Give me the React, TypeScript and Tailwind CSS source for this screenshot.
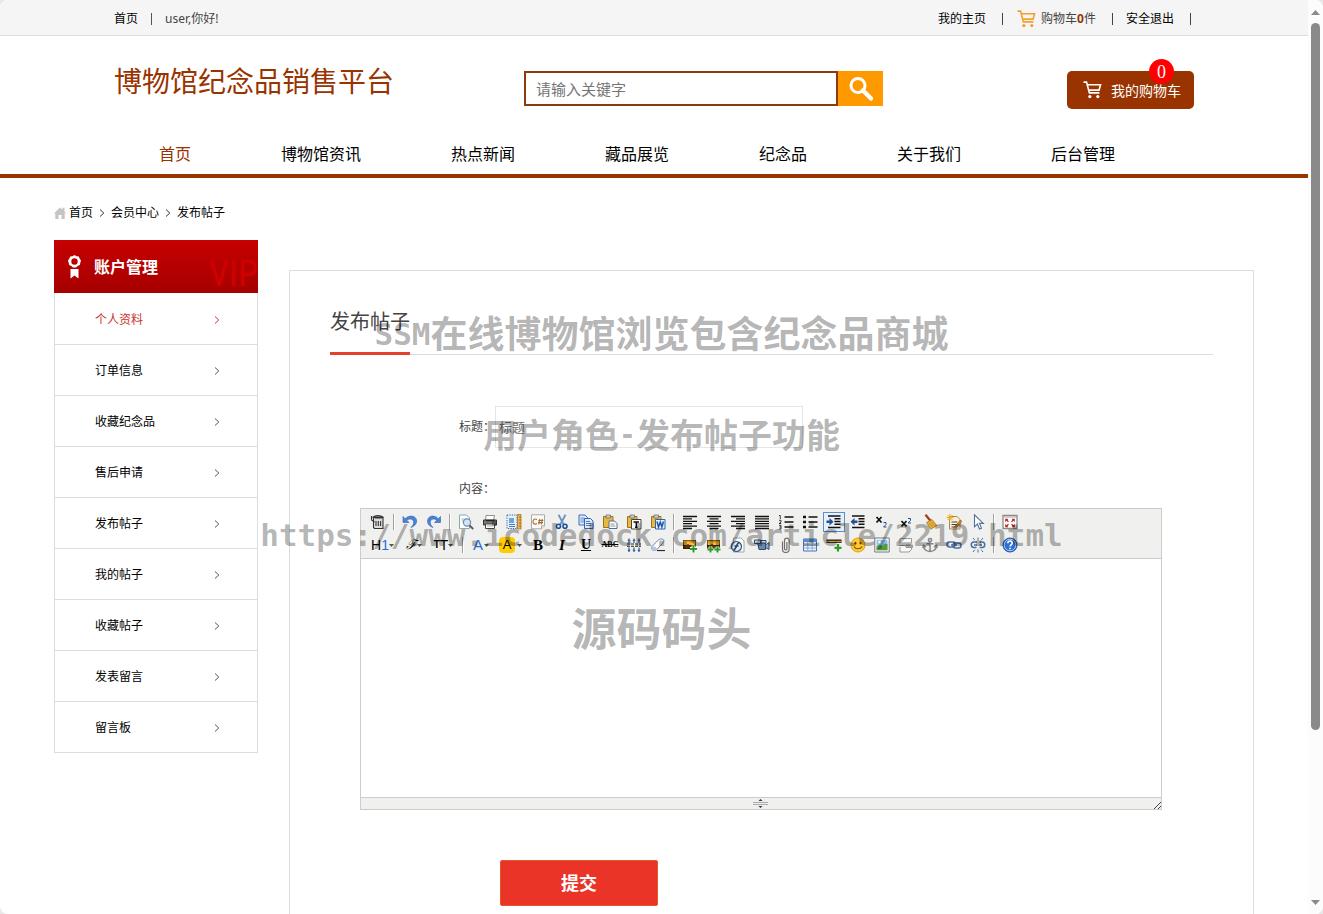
import React from 'react';

const navItems = ['首页', '博物馆资讯', '热点新闻', '藏品展览', '纪念品', '关于我们', '后台管理'];
const menuItems = ['个人资料', '订单信息', '收藏纪念品', '售后申请', '发布帖子', '我的帖子', '收藏帖子', '发表留言', '留言板'];

function CartIcon({ className }: { className: string }) {
  return (
    <svg className={className} viewBox="0 0 20 19" fill="none" stroke="currentColor" strokeWidth="1.7">
      <path d="M0.5 1.2h3.2l3 11.3h10.6M4.3 4h14.2l-1.6 5.6H6" />
      <circle cx="7.2" cy="16.4" r="1.7" fill="currentColor" stroke="none" />
      <circle cx="15.6" cy="16.4" r="1.7" fill="currentColor" stroke="none" />
    </svg>
  );
}

function Chevron({ className }: { className: string }) {
  return (
    <svg className={className} viewBox="0 0 6 8" fill="none" stroke="currentColor" strokeWidth="1">
      <path d="M1 0.5 4.8 4 1 7.5" />
    </svg>
  );
}

const lines = (rows: number[][]) => (
  <path
    d={rows.map(([x, w], i) => `M${x} ${2.5 + i * 2.4}h${w}`).join('')}
    stroke="#111"
    strokeWidth="1.3"
    fill="none"
  />
);

const clipboard = (
  <>
    <path d="M1.500 2.500h9.500v11h-9.500z" fill="#e9b93c" stroke="#9a7420" />
    <path d="M4 1h4.500v3H4z" fill="#c9c9c9" stroke="#666" strokeWidth=".7" />
  </>
);

const photo = (
  <>
    <path d="M1 3h13v9H1z" fill="#3a2106" />
    <path d="M1.500 3.500h12v4h-12z" fill="#e0941a" />
    <path d="M2 7c2-3 4-3 6-1l5-1v3H2z" fill="#f6c343" />
    <path d="M3 9l3-2 3 2 4-1v3H3z" fill="#5a3408" />
  </>
);

const icons: Record<string, React.ReactNode> = {
  source: (
    <g fill="none" stroke="#333" strokeWidth="1.100">
      <path d="M3.500 3.500h9.500v11H4.500l-1-1z" fill="#ddd" />
      <path d="M2.500 3.500c3-2.500 8-2.500 11 0M1.500 2v4l3 2M6 7v5M8.300 7v5M10.600 7v5M4.500 14.500h8" />
      <path d="M5 3.500h7" strokeWidth="2" />
    </g>
  ),
  undo: <path d="M1 2.500v6h6L4.800 6.300c2.700-2.300 6.200-1.400 6.800 1.200.4 1.900-.5 3.800-2.700 6 4.300-1.500 6.300-4.500 5.600-7.500C13.600 1.600 7.200.6 3.200 4.700z" fill="#4b83d6" stroke="#2c5fae" strokeWidth=".6" />,
  redo: <path d="M14.500 2.500v6h-6l2.200-2.200C8 4 5 5 4.300 7.500c-.4 1.900.5 3.800 2.700 6-4.300-1.500-6-4.500-5.300-7.500C2.500 1.600 8.300.6 12.300 4.700z" fill="#4b83d6" stroke="#2c5fae" strokeWidth=".6" />,
  preview: (
    <>
      <path d="M1.500 1h7l3 3v10.500h-10z" fill="#fff" stroke="#8aa" />
      <path d="M3.500 5h4M3.500 7h3" stroke="#9bb" />
      <circle cx="9" cy="8.500" r="3.600" fill="#cfe4f7" stroke="#6d8fb0" strokeWidth="1.200" />
      <path d="M11.500 11.300 15.200 15" stroke="#555" strokeWidth="1.800" />
    </>
  ),
  print: (
    <>
      <path d="M4 1.500h8.500l-1 5h-8z" fill="#fff" stroke="#777" strokeWidth=".8" />
      <path d="M1.500 6h13v5h-13z" fill="#777" stroke="#333" />
      <path d="M4 6.500h8.500" stroke="#222" strokeWidth="1.500" />
      <path d="M3.500 10h9v4.500h-9z" fill="#fff" stroke="#444" />
      <path d="M5 12h6" stroke="#aaa" />
    </>
  ),
  template: (
    <>
      <path d="M1 1h10v13.500H1z" fill="#e6f0fb" stroke="#2d5d9b" strokeDasharray="1.200 1.200" />
      <path d="M3 4h5v5H3z" fill="#6da6dd" />
      <path d="M3 10.500h6M3 12.500h6" stroke="#4a7db6" />
      <path d="M11.500.5h3.500v14.500h-3.500z" fill="#eeb54d" stroke="#a87217" strokeWidth=".8" />
      <path d="M13 3h2M13 6h2M13 9h2M13 12h2" stroke="#805510" strokeWidth=".7" />
    </>
  ),
  code: (
    <>
      <path d="M1.500.8h13v11l-3 3h-10z" fill="#fbfbf8" stroke="#aaa" />
      <path d="M14.500 11.800h-3v3" fill="#eee" stroke="#aaa" />
      <path d="M7 5.500c-3-1.500-4 .5-4 2.200S4.300 11 7 9.500M9.800 4.800l-1 5.500M12.300 4.800l-1 5.500M8.300 6.500h5M8 8.600h5" fill="none" stroke="#a66a2c" strokeWidth="1.100" />
    </>
  ),
  cut: (
    <>
      <path d="M4.500.8l5.200 9.700M11.500.8 6.300 10.500" stroke="#6d94bd" strokeWidth="1.800" />
      <circle cx="4.500" cy="12.300" r="2" fill="none" stroke="#1c4f9c" strokeWidth="1.600" />
      <circle cx="11" cy="12.300" r="2" fill="none" stroke="#1c4f9c" strokeWidth="1.600" />
    </>
  ),
  copy: (
    <>
      <path d="M1 1h6l2.500 2.500V11H1z" fill="#dceafb" stroke="#3d6fbb" />
      <path d="M2.500 4h4M2.500 6h5M2.500 8h4" stroke="#5f8fd2" />
      <path d="M6.500 4.500h6L15 7v7.500H6.500z" fill="#dceafb" stroke="#3463ad" />
      <path d="M8 7.500h4M8 9.500h5.500M8 11.500h5.500" stroke="#4a7fcc" />
    </>
  ),
  paste: (
    <>
      {clipboard}
      <path d="M7 7h5.500L15 9.500v5H7z" fill="#fff" stroke="#566d91" />
      <path d="M8.500 10h4M8.500 12h5" stroke="#89a" />
    </>
  ),
  plainpaste: (
    <>
      {clipboard}
      <path d="M5.500 5.500h9.500v9.500H5.500z" fill="#fff" stroke="#444" />
      <path d="M7.500 8h5.500M10.300 8v5.500M9 13.300h2.600" stroke="#111" strokeWidth="1.500" />
    </>
  ),
  wordpaste: (
    <>
      {clipboard}
      <path d="M5.500 5.500h9.500v9.500H5.500z" fill="#e8f1fd" stroke="#2c66b8" />
      <path d="M7 7.500l1.500 5.500L10.300 8l1.600 5 1.600-5.500" fill="none" stroke="#1d56ac" strokeWidth="1.500" />
    </>
  ),
  left: lines([[1, 14], [1, 9], [1, 14], [1, 9], [1, 14], [1, 9]]),
  center: lines([[1, 14], [3.5, 9], [1, 14], [3.5, 9], [1, 14], [3.5, 9]]),
  right: lines([[1, 14], [6, 9], [1, 14], [6, 9], [1, 14], [6, 9]]),
  justify: lines([[1, 14], [1, 14], [1, 14], [1, 14], [1, 14], [1, 14]]),
  ol: (
    <g stroke="#111" fill="none">
      <path d="M6.500 3h9M6.500 8h9M6.500 13h9" strokeWidth="1.300" />
      <path d="M1 1.500h1.300V5M1 6.300h2V8L1 9.500h2.300M1 11.300h2v3.700H1M1.500 13H3" strokeWidth=".8" />
    </g>
  ),
  ul: (
    <g stroke="#111">
      <path d="M6.500 3h9M6.500 8h9M6.500 13h9" strokeWidth="1.300" />
      <path d="M1 3h3M1 8h3M1 13h3" strokeWidth="2.600" />
    </g>
  ),
  indent: (
    <>
      <path d="M2 2h12.500M8.500 4.800h6M8.500 7.500h6M8.500 10.200h6M2 13.500h12.500" stroke="#111" strokeWidth="1.400" />
      <path d="M.5 6.500h3V4l4 3.800-4 3.700V9h-3z" fill="#234f95" />
    </>
  ),
  outdent: (
    <>
      <path d="M2 2h12.500M8.500 4.800h6M8.500 7.500h6M8.500 10.200h6M2 13.500h12.500" stroke="#111" strokeWidth="1.400" />
      <path d="M7.500 6.500h-3V4l-4 3.800 4 3.700V9h3z" fill="#234f95" />
    </>
  ),
  sub: (
    <>
      <path d="M2.500 3l5 5.500M7.500 3l-5 5.500" stroke="#111" strokeWidth="1.700" />
      <path d="M9.500 8.500h2.500v2l-2.500 2.500h3" fill="none" stroke="#234f95" />
    </>
  ),
  sup: (
    <>
      <path d="M3.500 7l5 5.500M8.500 7l-5 5.500" stroke="#111" strokeWidth="1.700" />
      <path d="M10 4.500h2.500v2L10 9h3" fill="none" stroke="#234f95" />
    </>
  ),
  clear: (
    <>
      <path d="M3.500.8 9 7.500" stroke="#a33b1c" strokeWidth="2.200" />
      <path d="M4.500 8.500 10 5.500l4.800 6-6 3.700z" fill="#e6b03a" stroke="#a8741a" strokeWidth=".8" />
      <path d="M7 9l4 4.500M9 8l4 4.500" stroke="#b67c1f" strokeWidth=".7" />
    </>
  ),
  quick: (
    <>
      <path d="M3.500 2.500H11l3 3V15H3.500z" fill="#fbf0d7" stroke="#a58a5a" />
      <path d="M5.500 8h6M5.500 10.500h6M5.500 13h4" stroke="#444" />
      <path d="M4 0v7M.5 3.500h7M1.500 1l5 5M6.500 1l-5 5" stroke="#edac1c" />
      <path d="M9 12.500 14.500 6l1.500 1.500-5.500 6z" fill="#d98c25" stroke="#704710" strokeWidth=".6" />
    </>
  ),
  select: <path d="M4.500.8v12l3-2.800 2 5 2-.9-2-4.700h3.800z" fill="#fff" stroke="#54719d" strokeWidth="1.100" />,
  full: (
    <>
      <path d="M1 1.500h14v13H1z" fill="#fff" stroke="#8b8b8b" strokeWidth="1.300" />
      <path d="M1.500 3h13" stroke="#aaa" />
      <path d="M3.500 5h2.500L3.500 7.500zM12.500 5v2.500L10 5zM3.500 13v-2.500L6 13zM12.500 13H10l2.500-2.500z" fill="#c3201f" stroke="#c3201f" strokeWidth=".5" />
      <path d="M4 5.500l2.500 2.300M12 5.500 9.500 7.800M4 12.500l2.500-2.300M12 12.500 9.500 10.200" stroke="#c3201f" strokeWidth="1.200" />
    </>
  ),
  lineheight: (
    <g stroke="#234f95" strokeWidth="1.100">
      <path d="M1 7h14M1 9.300h14" stroke="#222" strokeDasharray="3 1" />
      <path d="M3 6V1.500M8 6V1.500M13 6V1.500M3 10.500V15M8 10.500V15M13 10.500V15M1.800 3.200h2.400M6.800 3.200h2.400M11.800 3.200h2.400M1.800 13.200h2.400M6.800 13.200h2.400M11.800 13.200h2.400" />
    </g>
  ),
  eraser: (
    <>
      <path d="M2 9.500 8 3.200c1-1 2-1.200 3.200-1.200 2.500 0 3.500 1.500 2 3.500L7.500 12c-1 1-2 1.200-3.300 1.200C1.500 13.200.7 11.500 2 9.500z" fill="#fff" stroke="#7182a8" />
      <path d="M2 9.500c1.500-.8 4.500.5 5 2.700-1 1-2 1-3 1C1.500 13.200.7 11.500 2 9.500z" fill="#b9c5e4" />
      <path d="M7 13.600h8" stroke="#111" />
    </>
  ),
  image: (
    <>
      {photo}
      <path d="M11.500 8.500v7M8 12h7" stroke="#fff" strokeWidth="4" />
      <path d="M11.500 8.500v7M8 12h7" stroke="#2c9a27" strokeWidth="2" />
    </>
  ),
  multi: (
    <>
      {photo}
      <path d="M4.500 9.500v6M1.500 12.500h6M11.500 9.500v6M8.500 12.500h6" stroke="#fff" strokeWidth="3.500" />
      <path d="M4.500 9.500v6M1.500 12.500h6M11.500 9.500v6M8.500 12.500h6" stroke="#2c9a27" strokeWidth="2" />
    </>
  ),
  flash: (
    <>
      <path d="M3.500 1h7.500l3 3v11H3.500z" fill="#fff" stroke="#9aa" />
      <circle cx="6.500" cy="9.500" r="5" fill="#dfe9f2" stroke="#355878" strokeWidth="1.200" />
      <path d="M9.500 5.500c-3 0-3 7-6 7.500M4.500 9h4" fill="none" stroke="#28496b" strokeWidth="1.600" />
    </>
  ),
  media: (
    <>
      <path d="M3.500 6h8v6.500H5z" fill="#6c88aa" stroke="#314b6b" />
      <path d="M11.500 8l3.500-2.500v7l-3.500-2z" fill="#93abc6" stroke="#314b6b" />
      <path d="M.5 3h6v3.500h-6zM7 3.500h5V6H7z" fill="#c9d6e5" stroke="#314b6b" />
    </>
  ),
  file: <path d="M4.500 4.500v7.700a3.300 3.300 0 0 0 6.600 0V3.500a2.300 2.300 0 0 0-4.600 0v8.300a1.200 1.200 0 0 0 2.400 0V5" fill="none" stroke="#707070" strokeWidth="1.200" />,
  table: (
    <>
      <path d="M1.500 2h13v12h-13z" fill="#eef5fd" stroke="#4670b5" />
      <path d="M1.500 2h13v3h-13z" fill="#5d8bd0" />
      <path d="M1.500 8h13M1.500 11h13M5.800 5v9M10.200 5v9" stroke="#86a9db" />
    </>
  ),
  hr: (
    <>
      <path d="M.5 2.500h15V6H.5z" fill="#222" />
      <path d="M1 4.500h14" stroke="#d49b2a" strokeWidth="1.300" />
      <path d="M12 7v7.500M8.500 10.800h7" stroke="#2c9a27" strokeWidth="2.200" />
    </>
  ),
  emoji: (
    <>
      <circle cx="8" cy="8" r="7" fill="#fccb34" stroke="#e2a021" />
      <ellipse cx="5.500" cy="6.200" rx=".9" ry="1.400" fill="#6b3c06" />
      <ellipse cx="10.500" cy="6.200" rx=".9" ry="1.400" fill="#6b3c06" />
      <path d="M3.800 9.500c2 3 6.400 3 8.400 0" fill="none" stroke="#8b4b08" strokeWidth="1.200" />
    </>
  ),
  map: (
    <>
      <path d="M.8 1h14.400v14H.8z" fill="#fff" stroke="#777" />
      <path d="M2.500 2.800h11v10.500h-11z" fill="#8dc4ee" />
      <path d="M2.500 10c3-4 5-2 6-.5 2-4 4-3 5-2.500v6.300h-11z" fill="#569b3b" />
      <circle cx="5.500" cy="5" r="1.200" fill="#fff" />
    </>
  ),
  pagebreak: (
    <g stroke="#999" fill="#f8f8f8">
      <path d="M2 6.500V1.500h11.500v5M2 10v5h9l2.500-2.500V10" />
      <path d="M1 8.500h6" />
      <path d="M8 8h6.500v2.500H8z" fill="#aaa" />
    </g>
  ),
  anchor: (
    <g stroke="#858585" fill="none" strokeWidth="1.500">
      <circle cx="8" cy="3" r="1.600" />
      <path d="M8 4.800V14.500M4.500 6.800h7M1.500 9c.5 3.500 3 5.300 6.500 5.500 3.500-.2 6-2 6.500-5.500M.8 11 1.500 8.500 4 10M15.200 11l-.7-2.500L12 10" />
    </g>
  ),
  link: (
    <g stroke="#4a6fa5" fill="none" strokeWidth="1.500">
      <rect x="1" y="5" width="8" height="5" rx="2.500" />
      <rect x="7" y="6" width="8" height="5" rx="2.500" />
      <path d="M5 8h6" />
    </g>
  ),
  unlink: (
    <g stroke="#4a6fa5" fill="none" strokeWidth="1.500">
      <path d="M7 5H4a2.500 2.500 0 0 0 0 5.500h2.500M9.500 5H12a2.500 2.500 0 0 1 0 5.500H9.500M4 8h3M9.500 8H12" />
      <path d="M8 .5v3M3 1l1.800 2.200M13 1l-1.800 2.200M8 12.500v3M3 15l1.800-2.200M13 15l-1.800-2.200" strokeWidth="1" />
    </g>
  ),
  help: (
    <>
      <circle cx="8" cy="8" r="7" fill="#2f6fd3" stroke="#1d4f9f" />
      <circle cx="8" cy="8" r="5.800" fill="none" stroke="#bcd4f6" strokeWidth=".9" />
      <path d="M5.800 6.200c.2-3 4.600-2.700 4.400 0-.1 1.400-2 1.600-2.100 3.300M8 10.700v1.600" fill="none" stroke="#fff" strokeWidth="1.600" />
    </>
  ),
};

const caret = (
  <svg className="h-[3px] w-[5px] shrink-0" viewBox="0 0 5 3">
    <path d="M0 0h5L2.500 3z" fill="#555" />
  </svg>
);

const textTools: Record<string, React.ReactNode> = {
  h1: <span className="flex w-[25px] items-center justify-center font-['Liberation_Sans',sans-serif] text-[14px]">H<span className="text-[#2a6bd4]">1</span>{caret}</span>,
  font: <span className="flex w-[21px] items-center justify-center font-['DejaVu_Serif',serif] text-[13px] italic">ℱ{caret}</span>,
  size: <span className="flex w-[23px] items-center justify-center font-['Liberation_Sans',sans-serif]"><span className="text-[10px] font-bold">T</span><span className="text-[14px]">T</span>{caret}</span>,
  color: <span className="flex w-[20px] items-center justify-center gap-px font-['Liberation_Sans',sans-serif] text-[15px] text-[#2a6bd4]">A{caret}</span>,
  hilite: <span className="flex w-[23px] items-center justify-start gap-[2px] font-['Liberation_Sans',sans-serif] text-[13px]"><span className="w-4 rounded-sm bg-[#fc0] text-center leading-4">A</span>{caret}</span>,
  bold: <span className="w-4 text-center font-['Liberation_Serif',serif] text-[15px] font-black">B</span>,
  italic: <span className="w-4 text-center font-['Liberation_Serif',serif] text-[15px] font-bold italic">I</span>,
  underline: <span className="w-4 text-center font-['Liberation_Serif',serif] text-[14px] font-bold underline">U</span>,
  strike: <span className="flex w-4 justify-center font-['Liberation_Serif',serif] text-[8px] font-bold line-through">ABC</span>,
};

const toolRows = [
  'source | undo redo | preview print template code cut copy paste plainpaste wordpaste | left center right justify ol ul indent outdent sub sup clear quick select | full',
  'h1 font size | color hilite bold italic underline strike lineheight eraser | image multi flash media file table hr emoji map pagebreak anchor link unlink | help',
];

function Toolbar() {
  return (
    <div className="flex flex-col gap-px border-b border-[#ccc] bg-[#f0f0ee] px-[5px] py-[2px]">
      {toolRows.map((row) => (
        <div key={row} className="flex">
          {row.split(' ').map((name, i) =>
            name === '|' ? (
              <span key={i} className="mx-[3px] my-[3px] w-[2px] border-r border-l border-r-white border-l-[#a0a0a0]" />
            ) : (
              <button
                key={i}
                type="button"
                aria-label={name}
                className={`m-px flex h-5 items-center border px-[2px] leading-4 text-black ${name === 'indent' ? 'border-[#5690d2] bg-[#e9eff6]' : 'border-transparent'}`}
              >
                {textTools[name] ?? <svg className="size-4" viewBox="0 0 16 16">{icons[name]}</svg>}
              </button>
            ),
          )}
        </div>
      ))}
    </div>
  );
}

function TopBar() {
  return (
    <div className="border-b border-[#ddd] bg-[#f5f5f5]">
      <div className="mx-auto flex h-[35px] max-w-[1080px] items-center justify-between pt-[2px] text-[12px] text-[#444]">
        <div className="flex items-center">
          <a href="#" className="text-black">首页</a>
          <span className="mx-[13px] h-3 w-px bg-[#555]" />
          <span>user,你好!</span>
        </div>
        <div className="flex items-center">
          <a href="#" className="text-black">我的主页</a>
          <span className="mr-[14px] ml-4 h-3 w-px bg-[#444]" />
          <a href="#" className="flex items-center">
            <CartIcon className="mr-[5px] h-[18px] w-[19px] text-[#f5a02c]" />
            购物车<b className="text-[#930]">0</b>件
          </a>
          <span className="mr-[13px] ml-4 h-3 w-px bg-[#444]" />
          <a href="#" className="text-black">安全退出</a>
          <span className="mr-[3px] ml-4 h-3 w-px bg-[#444]" />
        </div>
      </div>
    </div>
  );
}

function Header() {
  return (
    <header className="border-b-4 border-[#930]">
      <div className="mx-auto max-w-[1080px]">
        <div className="flex items-start justify-between pt-[35px]">
          <h1 className="w-[410px] text-[28px] leading-5 text-[#930]">博物馆纪念品销售平台</h1>
          <form className="flex" onSubmit={(e) => e.preventDefault()}>
            <input
              type="search"
              aria-label="关键字"
              placeholder="请输入关键字"
              className="h-[35px] w-[314px] border-2 border-[#8c3a10] px-[10px] text-[15px] outline-none placeholder:text-[#757575]"
            />
            <button type="submit" aria-label="搜索" className="flex w-[45px] items-center justify-center bg-[#f90]">
              <svg className="size-6" viewBox="0 0 24 24" fill="none" stroke="#fff">
                <circle cx="9" cy="8.500" r="7" strokeWidth="3" />
                <path d="M14 13.500 22 21.500" strokeWidth="4.500" strokeLinecap="round" />
              </svg>
            </button>
          </form>
          <a href="#" className="relative ml-[184px] flex h-[38px] w-[127px] items-center rounded-[5px] bg-[#930] pl-4 text-[14px] text-white">
            <CartIcon className="mr-[9px] h-[18px] w-[19px]" />
            我的购物车
            <span className="absolute -top-3 right-5 flex size-[25px] items-center justify-center rounded-full bg-[#f00] font-['Liberation_Serif',serif] text-[18px] leading-none">0</span>
          </a>
        </div>
        <nav className="mt-[25px] flex h-10 items-center text-[16px]">
          {navItems.map((item, i) => (
            <a key={item} href="#" className={`px-[45px] ${i === 0 ? 'text-[#930]' : 'text-black'}`}>{item}</a>
          ))}
        </nav>
      </div>
    </header>
  );
}

function Sidebar() {
  return (
    <aside className="w-[204px] shrink-0 self-start">
      <div className="relative flex h-[53px] items-center overflow-hidden bg-linear-to-b from-[#c60000] to-[#a60000] pl-[13px] text-white">
        <svg className="mr-3 h-6 w-[15px]" viewBox="0 0 15 24" fill="#fff">
          <path fillRule="evenodd" d="M7.500 0l2 1.200 2.300.3.800 2.100 1.400 1.900-.6 2.100-.6 2.300-2.100 1-1.700 1.600H6L4.300 10.900l-2.100-1-.6-2.300L1 5.500l1.400-1.900.8-2.100 2.300-.3zm0 3.300a3.200 3.200 0 1 0 0 6.400 3.200 3.200 0 0 0 0-6.400z" />
          <path d="M3.500 14h8v9.500l-4-3-4 3z" />
        </svg>
        <h2 className="text-[16px] font-bold">账户管理</h2>
        <span aria-hidden="true" className="absolute right-0 bottom-0 font-['Roboto_Condensed','Open_Sans_Condensed','DejaVu_Sans_Condensed','Liberation_Sans',sans-serif] text-[36px] leading-[38px] text-[#d00000]">VIP</span>
      </div>
      <ul className="border-x border-[#ddd]">
        {menuItems.map((item, i) => (
          <li key={item} className={`border-b border-[#ddd] ${i === 0 ? 'pt-px' : ''}`}>
            <a href="#" className={`flex h-[50px] items-center justify-between pt-px pr-[37px] pl-10 text-[12px] ${i === 0 ? 'text-[#c9342b]' : 'text-black'}`}>
              {item}
              <Chevron className={`h-2 w-[6px] ${i === 0 ? '' : 'text-[#555]'}`} />
            </a>
          </li>
        ))}
      </ul>
    </aside>
  );
}

function Editor() {
  return (
    <div className="ml-[30px] max-w-[802px] border border-[#ccc]">
      <Toolbar />
      <textarea id="content" className="block h-[238px] w-full resize-none bg-white p-1 outline-none" />
      <div className="grid h-3 grid-cols-3 items-center border-t border-[#ccc] bg-[#f0f0ee]">
        <svg className="col-start-2 h-[11px] w-[15px] justify-self-center" viewBox="0 0 15 11">
          <path d="M0 4.500h15M0 6.500h15" stroke="#aaa" />
          <path d="M7.500 1 9.500 3h-4zM7.500 10 9.500 8h-4z" fill="#333" />
        </svg>
        <svg className="size-2 self-end justify-self-end" viewBox="0 0 8 8" stroke="#444">
          <path d="M1 8l7-7M5 8l3-3" />
        </svg>
      </div>
    </div>
  );
}

function Scrollbar() {
  return (
    <div className="flex w-[15px] shrink-0 flex-col items-center bg-[#fcfcfc] pt-[10px] pb-[9px]">
      <svg className="h-[5px] w-[9px]" viewBox="0 0 9 5"><path d="M4.500 0 9 5H0z" fill="#8a8a8a" /></svg>
      <div className="mt-2 h-[79%] w-[9px] rounded-full bg-[#8a8a8a]" />
      <svg className="mt-auto h-[5px] w-[9px]" viewBox="0 0 9 5"><path d="M0 0h9L4.500 5z" fill="#8a8a8a" /></svg>
    </div>
  );
}

function Watermark() {
  return (
    <div className="pointer-events-none absolute inset-0 flex flex-col items-center pt-[304px] font-bold whitespace-nowrap text-black/30">
      <p className="flex h-[60px] items-center text-[37px]"><span className="font-['DejaVu_Sans_Mono',monospace] text-[31px]">SSM</span>在线博物馆浏览包含纪念品商城</p>
      <p className="mt-[41px] flex h-[60px] items-center text-[34px]">用户角色<span className="font-['DejaVu_Sans_Mono',monospace] text-[28px]">-</span>发布帖子功能</p>
      <p className="mt-[40px] flex h-[60px] items-center font-['DejaVu_Sans_Mono',monospace] text-[31px]">https://www.icodedock.com/article/2219.html</p>
      <p className="mt-[34px] flex h-[60px] items-center text-[45px]">源码码头</p>
    </div>
  );
}

export default function App() {
  return (
    <div className="bg-[#e8e8e8]">
      <div className="relative flex h-screen overflow-hidden rounded-lg bg-white font-['Noto_Sans','Noto_Sans_CJK_SC',sans-serif] text-[#444]">
        <div className="min-w-0 flex-1 overflow-y-auto [scrollbar-width:none]">
          <TopBar />
          <Header />
          <main className="mx-auto max-w-[1200px]">
            <nav className="flex h-[62px] items-center pt-[7px] text-[12px] text-black">
              <svg className="mr-[3px] h-3 w-3" viewBox="0 0 12 12" fill="#c4c4c4">
                <path d="M6 0.500 8.500 2.800V.8h2v3.800L12 6.200h-1.300V12H7.500V8h-3v4H1.300V6.200H0z" />
              </svg>
              <a href="#">首页</a>
              <Chevron className="mx-[6px] h-2 w-[6px] text-[#333]" />
              <a href="#">会员中心</a>
              <Chevron className="mx-[6px] h-2 w-[6px] text-[#333]" />
              <a href="#">发布帖子</a>
            </nav>
            <div className="flex">
              <Sidebar />
              <section className="mt-[30px] ml-[31px] min-w-0 flex-1 border border-[#ddd] px-10 pt-[30px] pb-10">
                <div className="flex border-b border-[#ddd]">
                  <h3 className="-mb-px border-b-[3px] border-[#e2412b] pb-[9px] text-[20px] leading-[42px] text-[#444]">发布帖子</h3>
                </div>
                <form className="pt-[51px]" onSubmit={(e) => e.preventDefault()}>
                  <div className="ml-[129px] flex items-center text-[12px]">
                    <label htmlFor="title" className="w-9">标题：</label>
                    <input id="title" placeholder="标题" className="h-[42px] w-[308px] border border-[#e5e5e5] px-[3px] text-[13px] outline-none placeholder:text-[#757575]" />
                  </div>
                  <label htmlFor="content" className="mt-[31px] mb-[9px] ml-[129px] block text-[12px] leading-5">内容：</label>
                  <Editor />
                  <button type="submit" className="mt-[50px] ml-[170px] h-[46px] w-[158px] rounded-[2px] border border-[#e4572b] bg-[#e93427] text-[18px] font-bold text-white">提交</button>
                </form>
              </section>
            </div>
          </main>
        </div>
        <Scrollbar />
        <Watermark />
      </div>
    </div>
  );
}
